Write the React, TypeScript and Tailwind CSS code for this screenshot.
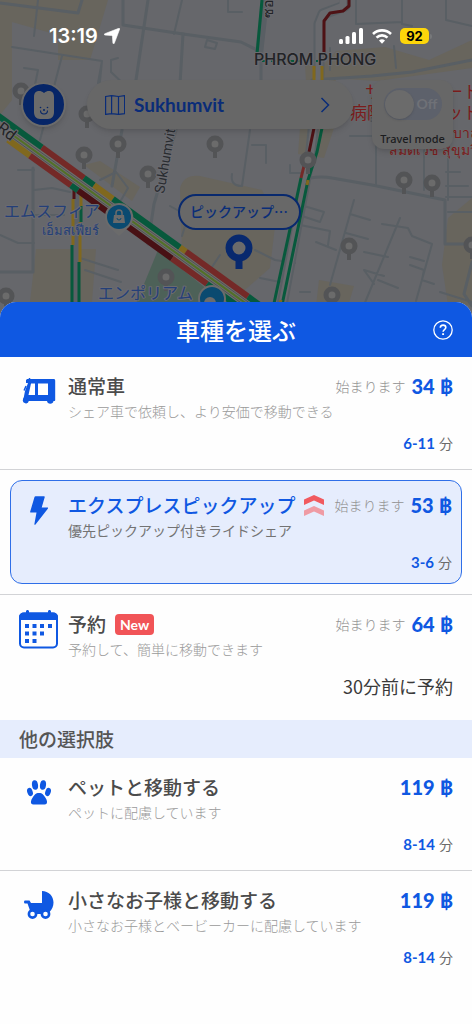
import { useState, type ReactNode } from "react";

interface RideOption {
  id: string;
  icon: ReactNode;
  title: string;
  desc: string;
  price: string;
  startsAt?: boolean;
  minutes?: string;
  note?: string;
  badge?: ReactNode;
}

const JP = "font-['Noto_Sans_CJK_JP',sans-serif]";
const LATIN = "font-['Lato','Noto_Sans',sans-serif]";

/** Traffic on the diagonal avenue: [from x, to x, colour] per carriageway. */
const UPPER_LANE: [number, number, string][] = [
  [-4, 42, "#07593c"],
  [42, 84, "#742927"],
  [84, 94, "#07593c"],
  [94, 113, "#80681e"],
  [113, 180, "#07593c"],
  [180, 186, "#80681e"],
  [186, 248, "#742927"],
  [248, 275, "#07593c"],
];

const LOWER_LANE: [number, number, string][] = [
  [8, 30, "#80681e"],
  [30, 71, "#742927"],
  [71, 78, "#07593c"],
  [78, 172, "#481114"],
  [172, 207, "#742927"],
  [207, 250, "#07593c"],
];

const GREY_PINS = [
  [21, 91], [87, 114], [118, 144], [84, 155], [148, 174], [215, 144],
  [166, 277], [6, 296], [308, 160], [404, 180], [432, 183], [349, 246],
  [332, 295], [472, 245], [374, 114],
];

function lane(y0: number, segments: [number, number, string][]) {
  return segments.map(([x1, x2, color]) => (
    <line key={x1} x1={x1} x2={x2} y1={y0 + x1 * 0.724} y2={y0 + x2 * 0.724} stroke={color} strokeWidth="6" />
  ));
}

function StreetMap() {
  return (
    <svg
      viewBox="0 0 472 330"
      preserveAspectRatio="xMidYMin slice"
      className="absolute inset-x-0 top-0 h-[330px] w-full"
      aria-hidden="true"
    >
      <rect width="472" height="330" fill="#66676b" />
      <g fill="#68655d">
        <path d="M0 0h108l-18 60H58V35L12 22v78L0 115z" />
        <path d="M385 47l44 13 43-20v28l-95 13-65-4 24-26z" />
        <path d="M305 65h23l8 16h-30z" />
        <path d="M300 128h34l-10 30-26-4z" />
        <path d="M180 188q4-14 20-12l62 14 14 28-6 50-32 28-56-44z" />
        <path d="M36 249h60l-4 53H30z" />
        <path d="M448 218l24-20v107h-24l-6-40z" />
        <path d="M319 280l35 6-6 20h-32z" />
        <path d="M84 165l16-4 40 26-8 14z" />
      </g>
      <path d="M158 250l70 56h-93z" fill="#4d6158" />

      <g fill="none" stroke="#595f64" strokeLinecap="round" strokeLinejoin="round">
        <g strokeWidth="3">
          <path d="M0 3l78 10 4-13" />
          <path d="M123 0v25l60 9 58 8 20 10v28" />
          <path d="M148 0l-12 80" />
          <path d="M183 34l-3 50" />
          <path d="M33 168v104H0" />
          <path d="M312 80l60-4 40-4 60-12" />
          <path d="M310 178q12-2 22 0l40 7 73 15v44h27" />
          <path d="M176 130l-22 74-6 40" />
          <path d="M122 130l-10 56" />
          <path d="M472 262l-8 32 8 12" />
        </g>
        <g strokeWidth="2">
          <path d="M12 47l90 14-6 60M102 61l-4 22" />
          <path d="M38 0l-4 36M62 56L40 140M118 58l-7 2 0 12 17 16v20M24 68l14 2-4 20" />
          <path d="M0 235l18 8h16M34 170H18M34 190l18-2 18 4M34 215h30" />
          <path d="M182 0l-8 34M228 0v12h14M402 0v24l10 2M356 0v24l46-2M446 0v20l26 6M448 132v68" />
          <path d="M376 130v55M424 130v60M446 172h14M446 186h22M446 197h26M448 212h24" />
          <path d="M354 200l-24 85M350 214l20 6M346 233l22 6" />
          <path d="M400 218l-36 87M382 224l26 4 4 8 20 8-16 57M378 280l20 8M374 284l-10-14 20 6M364 252l24 5M410 257l14 4M410 265l14 5-2 10 12 4" />
          <path d="M304 206l20 6-4 10-18-6M300 225l30 6-2 14M316 242l20 8" />
          <path d="M255 250l20 10 20 3M260 278l30 6M300 292h10M440 292l32 10" />
          <path d="M80 258l38 12M85 270l36 12M220 255l-12 18M170 206l18 10-6 20" />
          <path d="M100 180l16-8 12 16-8 14M207 40l-2 7 10 2 2-6-10-3M250 130l-8 56q-12 0-10-12" />
          <path d="M330 48v22M394 46l2 22M252 145h14v18M290 165v8h14M350 136h22" />
        </g>
      </g>

      {/* north-south avenue with the skytrain line */}
      <g fill="none" strokeLinejoin="round">
        <path d="M265 0l-6 54" stroke="#595f64" strokeWidth="8" />
        <path d="M262 0l-5 54" stroke="#07593c" strokeWidth="3" />
        <path d="M345 0v6l-22 8-4 10v50l-8 76-34 182" stroke="#595f64" strokeWidth="11" />
        <path d="M343 0v6l-20 8-4 10v50l-8 76-34 182" stroke="#68696d" strokeWidth="7" />
        <path d="M349 0v6l-6 5-13 2-6 8v32" stroke="#4e1215" strokeWidth="3" />
        <path d="M262 61h56" stroke="#07593c" strokeWidth="2" strokeDasharray="5 4" />
        <path d="M314 66v14M322 66v14" stroke="#80681e" strokeWidth="3" />
        <path d="M314 128l-5 24" stroke="#4e1215" strokeWidth="3" />
        <path d="M322 128l-5 24-9 28-27 130" stroke="#07593c" strokeWidth="3" />
        <path d="M304 166l-3 12" stroke="#742927" strokeWidth="3" />
        <path d="M301 178l-28 130" stroke="#07593c" strokeWidth="3" />
        <path d="M308 180l-1 5M281 300l-2 8" stroke="#80681e" strokeWidth="3" />
      </g>

      {/* side street under the avenue */}
      <g strokeWidth="3" fill="none">
        <path d="M76 190v120" stroke="#5c6066" strokeWidth="6" />
        <path d="M74 190v9" stroke="#4e1215" />
        <path d="M73 199v46M81 190v16M80 222v40" stroke="#80681e" />
        <path d="M72 245v60M81 206v16M79 262v43" stroke="#07593c" />
      </g>

      <path d="M4 128L280 328" stroke="#6c6e6c" strokeWidth="13" />
      {lane(117, UPPER_LANE)}
      {lane(134, LOWER_LANE)}
      <path d="M10 133L280 328" stroke="#527026" strokeWidth="2" />
      <path d="M10 130L280 325M10 136L280 331" stroke="#505252" strokeWidth="1" />

      {GREY_PINS.map(([x, y]) => (
        <g key={`${x}-${y}`}>
          <path d={`M${x} ${y}v14`} stroke="#535456" strokeWidth="4" />
          <circle cx={x} cy={y} r="6" fill="#6b6b6b" stroke="#535456" strokeWidth="5" />
        </g>
      ))}

      <g className={JP} stroke="#6b6b70" strokeWidth="2" paintOrder="stroke" strokeLinejoin="round">
        <text x="254" y="65" fontSize="16" fill="#222326" fontWeight="500" className="font-['Inter',sans-serif]">
          PHROM PHONG
        </text>
        <text transform="translate(164 194) rotate(-80)" fontSize="14" fill="#292c30" className="font-['Roboto',sans-serif]">
          Sukhumvit
        </text>
        <text transform="translate(-4 130) rotate(37)" fontSize="16" fill="#222326" className="font-['Roboto',sans-serif]">
          Rd
        </text>
        <text transform="translate(273 18) rotate(-90)" fontSize="14" fill="#222326">
          ซอ
        </text>
        <text x="4" y="217" fontSize="16" fill="#243f78">エムスフィア</text>
        <text x="42" y="235" fontSize="13" fill="#243f78">เอ็มสเฟียร์</text>
        <text x="98" y="299" fontSize="16" fill="#243f78">エンポリアム</text>
        <g fill="#7b1c1c" stroke="#68696c">
          <text x="365" y="98" fontSize="17">サ</text>
          <text x="446" y="98" fontSize="17">ート</text>
          <text x="350" y="119" fontSize="17">病院</text>
          <text x="446" y="119" fontSize="17">ット</text>
          <text x="453" y="138" fontSize="14">บาล</text>
          <text x="389" y="155" fontSize="14">สมิติเวช สุขุมวิท</text>
        </g>
      </g>

      {/* shopping mall markers */}
      <g>
        <path d="M119 203a14 14 0 0 1 10 24l-10 9-10-9a14 14 0 0 1 10-24z" fill="#6b6b6b" />
        <circle cx="119" cy="217" r="12" fill="#0a4a70" />
        <path d="M114 215h10l1 8h-12z" fill="#6b6b6b" />
        <path d="M116 215v-2a3 3 0 0 1 6 0v2" fill="none" stroke="#6b6b6b" strokeWidth="1.5" />
        <path d="M117 218a2 2 0 0 0 4 0" fill="none" stroke="#0a4a70" />
        <circle cx="212" cy="299" r="13" fill="#0a4a70" stroke="#6b6b6b" strokeWidth="2" />
        <circle cx="210" cy="303" r="6" fill="#6b6b6b" />
      </g>

      {/* pickup point */}
      <rect x="179" y="195" width="121" height="34" rx="17" fill="#686868" stroke="#08296e" strokeWidth="2" />
      <text x="190" y="217" fontSize="14" fill="#0b2e78" fontWeight="500" className={JP}>
        ピックアップ…
      </text>
      <path d="M239 256v13" stroke="#08296e" strokeWidth="7" />
      <circle cx="239" cy="248" r="10" fill="#6b6b6b" stroke="#08296e" strokeWidth="7" />
    </svg>
  );
}

function StatusBar() {
  return (
    <div className="flex h-[72px] items-center justify-between pr-[40px] pl-[49px] text-white">
      <div className="flex items-center gap-[6px]">
        <span className="font-['Inter',sans-serif] text-[20px] leading-6 font-semibold">13:19</span>
        <svg viewBox="0 0 16 16" className="h-4 w-4" fill="currentColor" aria-hidden="true">
          <path d="M15.700 1L10.300 15.300c-.3.800-1.300.700-1.400-.2L8.400 8.300 7.700 7.600 1 7.100C.1 7 0 6 .8 5.700L14.800.3c.700-.3 1.100.1.900.7z" stroke="currentColor" strokeWidth=".6" />
        </svg>
      </div>
      <div className="flex items-center gap-2">
        <svg viewBox="0 0 25 16" className="h-4 w-[25px]" fill="currentColor" aria-hidden="true">
          <rect x="0" y="11" width="4" height="5" rx="1.500" />
          <rect x="6.500" y="8" width="4" height="8" rx="1.500" />
          <rect x="13" y="4" width="4" height="12" rx="1.500" />
          <rect x="20" y="0" width="4" height="16" rx="1.500" />
        </svg>
        <svg viewBox="0 0 20 15" className="h-[15px] w-5" fill="none" stroke="currentColor" aria-hidden="true">
          <path d="M1 5a13 13 0 0 1 18 0" strokeWidth="2.600" />
          <path d="M4.500 8.600a8 8 0 0 1 11 0" strokeWidth="2.600" />
          <path d="M7 11.500a4.500 4.500 0 0 1 6 0l-3 3.200z" fill="currentColor" stroke="none" />
        </svg>
        <span className="flex items-center gap-px">
          <span className="flex h-4 w-[29px] items-center justify-center rounded-[5px] bg-[#fdd60a] font-['Inter',sans-serif] text-[13px] leading-4 font-bold text-black">
            92
          </span>
          <span className="h-[5px] w-[2px] rounded-r bg-[#77787a]" />
        </span>
      </div>
    </div>
  );
}

function TopControls() {
  const [travelMode, setTravelMode] = useState(false);
  return (
    <div className="mt-2 flex items-start gap-[19px] pr-[19px] pl-[21px]">
      <div className="flex h-[49px] min-w-0 flex-1 items-center gap-[21px]">
        <button
          type="button"
          aria-label="Profile"
          className="flex h-[45px] w-[45px] shrink-0 items-center justify-center rounded-full border-2 border-[#6b6b6b] bg-[#062567] shadow-md"
        >
          <svg viewBox="0 0 20 28" className="h-7 w-5" aria-hidden="true">
            <path d="M0 6c0-4 2-6 5-6 2 0 3 .5 5 2 2-1.500 3-2 5-2 3 0 5 2 5 6v15c0 4-2 7-6 7H6c-4 0-6-3-6-7z" fill="#6b6b6b" />
            <path d="M6.500 19.500a3.500 3.500 0 0 0 7 0" fill="none" stroke="#062567" strokeWidth="1.100" />
            <circle cx="6.500" cy="16.500" r=".8" fill="#062567" />
            <circle cx="13.500" cy="16.500" r=".8" fill="#062567" />
            <circle cx="10" cy="19" r="1" fill="#062567" />
          </svg>
        </button>
        <button
          type="button"
          className="flex h-full min-w-0 flex-1 items-center rounded-full bg-[#676767] pr-[23px] pl-[18px] text-[#0a2c78] shadow-md"
        >
          <svg viewBox="0 0 20 20" className="h-5 w-5" fill="none" stroke="currentColor" aria-hidden="true">
            <path d="M.6 1.500l6-.9 7 .9 6-.9v18l-6 .8-7-.8-6 .8zM6.600.6v18M13.500 1.500v18" strokeWidth="1.200" />
          </svg>
          <span className={`${LATIN} ml-[9px] text-[19px] leading-6 font-bold`}>Sukhumvit</span>
          <svg viewBox="0 0 10 16" className="ml-auto h-4 w-[10px]" fill="none" stroke="currentColor" aria-hidden="true">
            <path d="M1.500 1l7 7-7 7" strokeWidth="1.500" />
          </svg>
        </button>
      </div>
      <label className="flex h-[69px] w-[81px] flex-col items-center rounded-xl bg-[#676767] pt-2 shadow-md">
        <input
          type="checkbox"
          role="switch"
          checked={travelMode}
          onChange={(e) => setTravelMode(e.target.checked)}
          className="peer sr-only"
        />
        <span className="flex h-8 w-[58px] items-center rounded-full bg-[#5d616b] p-px peer-checked:flex-row-reverse">
          <span className="h-[29px] w-[29px] shrink-0 rounded-full bg-[#6b6b6b] shadow" />
          <span className={`${LATIN} flex-1 text-center text-[14px] leading-4 font-bold text-[#6f7177]`}>
            {travelMode ? "On" : "Off"}
          </span>
        </span>
        <span className="mt-[11px] font-['Noto_Sans',sans-serif] text-[11px] leading-4 font-medium whitespace-nowrap text-[#1b1c1e]">
          Travel mode
        </span>
      </label>
    </div>
  );
}

function TukTukIcon() {
  return (
    <svg viewBox="0 0 34 26" className="h-[26px] w-[34px]" aria-hidden="true">
      <path
        fillRule="evenodd"
        fill="currentColor"
        d="M4 2.500C4 1.500 5 1 6 1h25.500c1.200 0 1.700.6 1.700 1.800V22c0 .7-.4 1-1 1h-.7a3.300 3.300 0 0 1-6.500 0H6.800A3 3 0 1 1 1 21.500c0-1 .2-1.600.8-2.300L3 13l3-8H4zM9 5.500L6.500 17H13V5.500zM16 5.500V17h10V5.500z"
      />
      <path d="M3.800 8.500L2.300 12M7.500 0v3" stroke="currentColor" strokeWidth="1.500" strokeLinecap="round" />
    </svg>
  );
}

function BoltIcon() {
  return (
    <svg viewBox="0 0 18 29" className="h-[29px] w-[18px]" fill="currentColor" aria-hidden="true">
      <path d="M5.500.3h8.600c.5 0 .8.400.6.900L11.700 11.500h6c.5 0 .6.400.4.8L5.500 28.400c-.5.6-1.300.400-1.100-.4L6.500 16.500H.8c-.5 0-.8-.4-.6-.9L4.500 1c.2-.5.5-.7 1-.7z" />
    </svg>
  );
}

function CalendarIcon() {
  const dots = [
    [6, 14], [13.5, 14], [21, 14], [29, 14],
    [6, 21.5], [13.5, 21.5], [21, 21.5],
    [6, 29], [13.5, 29],
  ];
  return (
    <svg viewBox="0 0 39 39" className="h-[39px] w-[39px] shrink-0" fill="currentColor" aria-hidden="true">
      <rect x="1" y="3.500" width="37" height="34" rx="4" fill="none" stroke="currentColor" strokeWidth="2" />
      <path d="M0 10V7c0-3 2-4.500 5-4.500h29c3 0 5 1.500 5 4.500v3zM7 1.500c0-2 3-2 3 0V4H7zM29 1.500c0-2 3-2 3 0V4h-3z" />
      {dots.map(([x, y]) => (
        <rect key={`${x}-${y}`} x={x} y={y} width="4" height="4" />
      ))}
    </svg>
  );
}

function PawIcon() {
  return (
    <svg viewBox="0 0 24 25" className="h-[25px] w-6" fill="currentColor" aria-hidden="true">
      <ellipse cx="8" cy="5" rx="3" ry="4.800" transform="rotate(-8 8 5)" />
      <ellipse cx="16" cy="5" rx="3" ry="4.800" transform="rotate(8 16 5)" />
      <ellipse cx="3" cy="12" rx="2.700" ry="4.300" transform="rotate(-18 3 12)" />
      <ellipse cx="21" cy="12" rx="2.700" ry="4.300" transform="rotate(18 21 12)" />
      <path d="M12 13c3.500 0 4.500 2 6.300 4.500 1.700 2.200 3.200 7-.8 7H6.500c-4 0-2.500-4.800-.8-7C7.500 15 8.500 13 12 13z" />
    </svg>
  );
}

function StrollerIcon() {
  return (
    <svg viewBox="0 0 30 28" className="h-7 w-[30px]" aria-hidden="true">
      <path
        fill="currentColor"
        d="M18 0c6.500 0 11.500 5 11.500 11.500 0 4-1.500 7-4 9.500l-3 2H9l-3-3.500L3.500 12.500H.8c-1 0-1-3 0-3h4.700l1.500 2.500h11z"
      />
      <circle cx="8.500" cy="23" r="3.600" fill="#fefefe" stroke="currentColor" strokeWidth="2.600" />
      <circle cx="21.500" cy="23" r="3.600" fill="#fefefe" stroke="currentColor" strokeWidth="2.600" />
    </svg>
  );
}

function DoubleChevron() {
  return (
    <svg viewBox="0 0 20 21" className="h-[21px] w-5 shrink-0" aria-hidden="true">
      <path d="M0 4.500L10 0l10 4.500v5.500L10 5.500 0 10z" fill="#f15a5f" />
      <path d="M0 15.500L10 11l10 4.500V21l-10-4.500L0 21z" fill="#ef9ba4" />
    </svg>
  );
}

const RIDES: RideOption[] = [
  {
    id: "regular",
    icon: <TukTukIcon />,
    title: "通常車",
    desc: "シェア車で依頼し、より安価で移動できる",
    price: "34",
    startsAt: true,
    minutes: "6-11",
  },
  {
    id: "express",
    icon: <BoltIcon />,
    title: "エクスプレスピックアップ",
    desc: "優先ピックアップ付きライドシェア",
    price: "53",
    startsAt: true,
    minutes: "3-6",
    badge: <DoubleChevron />,
  },
  {
    id: "reserve",
    icon: <CalendarIcon />,
    title: "予約",
    desc: "予約して、簡単に移動できます",
    price: "64",
    startsAt: true,
    note: "30分前に予約",
    badge: (
      <span className={`${LATIN} rounded bg-[#f15457] px-[5px] text-[14px] leading-[21px] font-bold text-white`}>
        New
      </span>
    ),
  },
];

const OTHER_RIDES: RideOption[] = [
  {
    id: "pet",
    icon: <PawIcon />,
    title: "ペットと移動する",
    desc: "ペットに配慮しています",
    price: "119",
    minutes: "8-14",
  },
  {
    id: "child",
    icon: <StrollerIcon />,
    title: "小さなお子様と移動する",
    desc: "小さなお子様とベービーカーに配慮しています",
    price: "119",
    minutes: "8-14",
  },
];

interface RideRowProps {
  ride: RideOption;
  selected: boolean;
  onSelect: (id: string) => void;
}

function RideRow({ ride, selected, onSelect }: RideRowProps) {
  return (
    <button
      type="button"
      aria-pressed={selected}
      onClick={() => onSelect(ride.id)}
      className={
        selected
          ? "m-[10px] flex flex-1 gap-[11px] rounded-xl border border-[#2f6fe8] bg-[#e6edfd] px-[9px] py-[10px] text-left"
          : "flex w-full gap-[11px] py-[15px] pr-[19px] pl-5 text-left"
      }
    >
      <span className="flex h-[38px] w-[37px] shrink-0 items-center justify-center text-[#0f58e2]">
        {ride.icon}
      </span>
      <span className="flex min-w-0 flex-1 flex-col">
        <span className="flex h-7 items-center whitespace-nowrap">
          <span
            className={`text-[19px] leading-7 font-medium ${selected ? "text-[#0f58e2]" : "text-[#4b4b4b]"}`}
          >
            {ride.title}
          </span>
          {ride.badge && <span className="ml-[9px] flex">{ride.badge}</span>}
          <span className="ml-auto flex items-center gap-[6px]">
            {ride.startsAt && <span className="text-[14px] leading-7 font-light text-[#929292]">始まります</span>}
            <span className={`${LATIN} text-[20px] leading-7 font-black text-[#0f58e2]`}>{ride.price} ฿</span>
          </span>
        </span>
        <span
          className={`text-[14px] leading-[22px] ${selected ? "font-normal text-[#737373]" : "font-light text-[#9a9a9a]"}`}
        >
          {ride.desc}
        </span>
        {ride.minutes && (
          <span className="mt-[10px] flex items-center justify-end gap-1 text-[14px] leading-[22px] text-[#6b6b6b]">
            <span className={`${LATIN} text-[15px] font-bold text-[#0f58e2]`}>{ride.minutes}</span>
            <span>分</span>
          </span>
        )}
        {ride.note && (
          <span className="mt-3 mb-[5px] text-right text-[18px] leading-7 text-[#3a3a3a]">{ride.note}</span>
        )}
      </span>
    </button>
  );
}

export default function App() {
  const [selected, setSelected] = useState("express");

  return (
    <main className={`${JP} relative flex min-h-screen flex-col bg-[#fefefe]`}>
      <StreetMap />
      <header className="relative h-[302px]">
        <StatusBar />
        <TopControls />
      </header>

      <section className="relative flex-1 overflow-hidden rounded-t-[16px] bg-[#fefefe]">
        <div className="grid h-[55px] grid-cols-[1fr_auto_1fr] items-center bg-[#0f58e2] px-[19px] text-white">
          <h1 className="col-start-2 text-[24px] leading-8 font-medium">車種を選ぶ</h1>
          <button type="button" aria-label="Help" className="justify-self-end">
            <svg viewBox="0 0 20 20" className="h-5 w-5" fill="none" stroke="currentColor" aria-hidden="true">
              <circle cx="10" cy="10" r="9.200" strokeWidth="1.300" />
              <path d="M7.300 7.800c0-1.700 1.200-2.700 2.800-2.700s2.700 1 2.700 2.400c0 2-2.700 2.100-2.700 4.300" strokeWidth="1.600" />
              <path d="M10.100 13.200v1.900" strokeWidth="1.900" />
            </svg>
          </button>
        </div>

        <ul className="divide-y divide-[#d2d3d6]">
          {RIDES.map((ride) => (
            <li key={ride.id} className="flex">
              <RideRow ride={ride} selected={selected === ride.id} onSelect={setSelected} />
            </li>
          ))}
        </ul>
        <h2 className="bg-[#e6edfd] px-[19px] text-[19px] leading-[38px] font-medium text-[#555555]">他の選択肢</h2>
        <ul className="divide-y divide-[#d2d3d6]">
          {OTHER_RIDES.map((ride) => (
            <li key={ride.id} className="flex">
              <RideRow ride={ride} selected={selected === ride.id} onSelect={setSelected} />
            </li>
          ))}
        </ul>
      </section>
    </main>
  );
}
